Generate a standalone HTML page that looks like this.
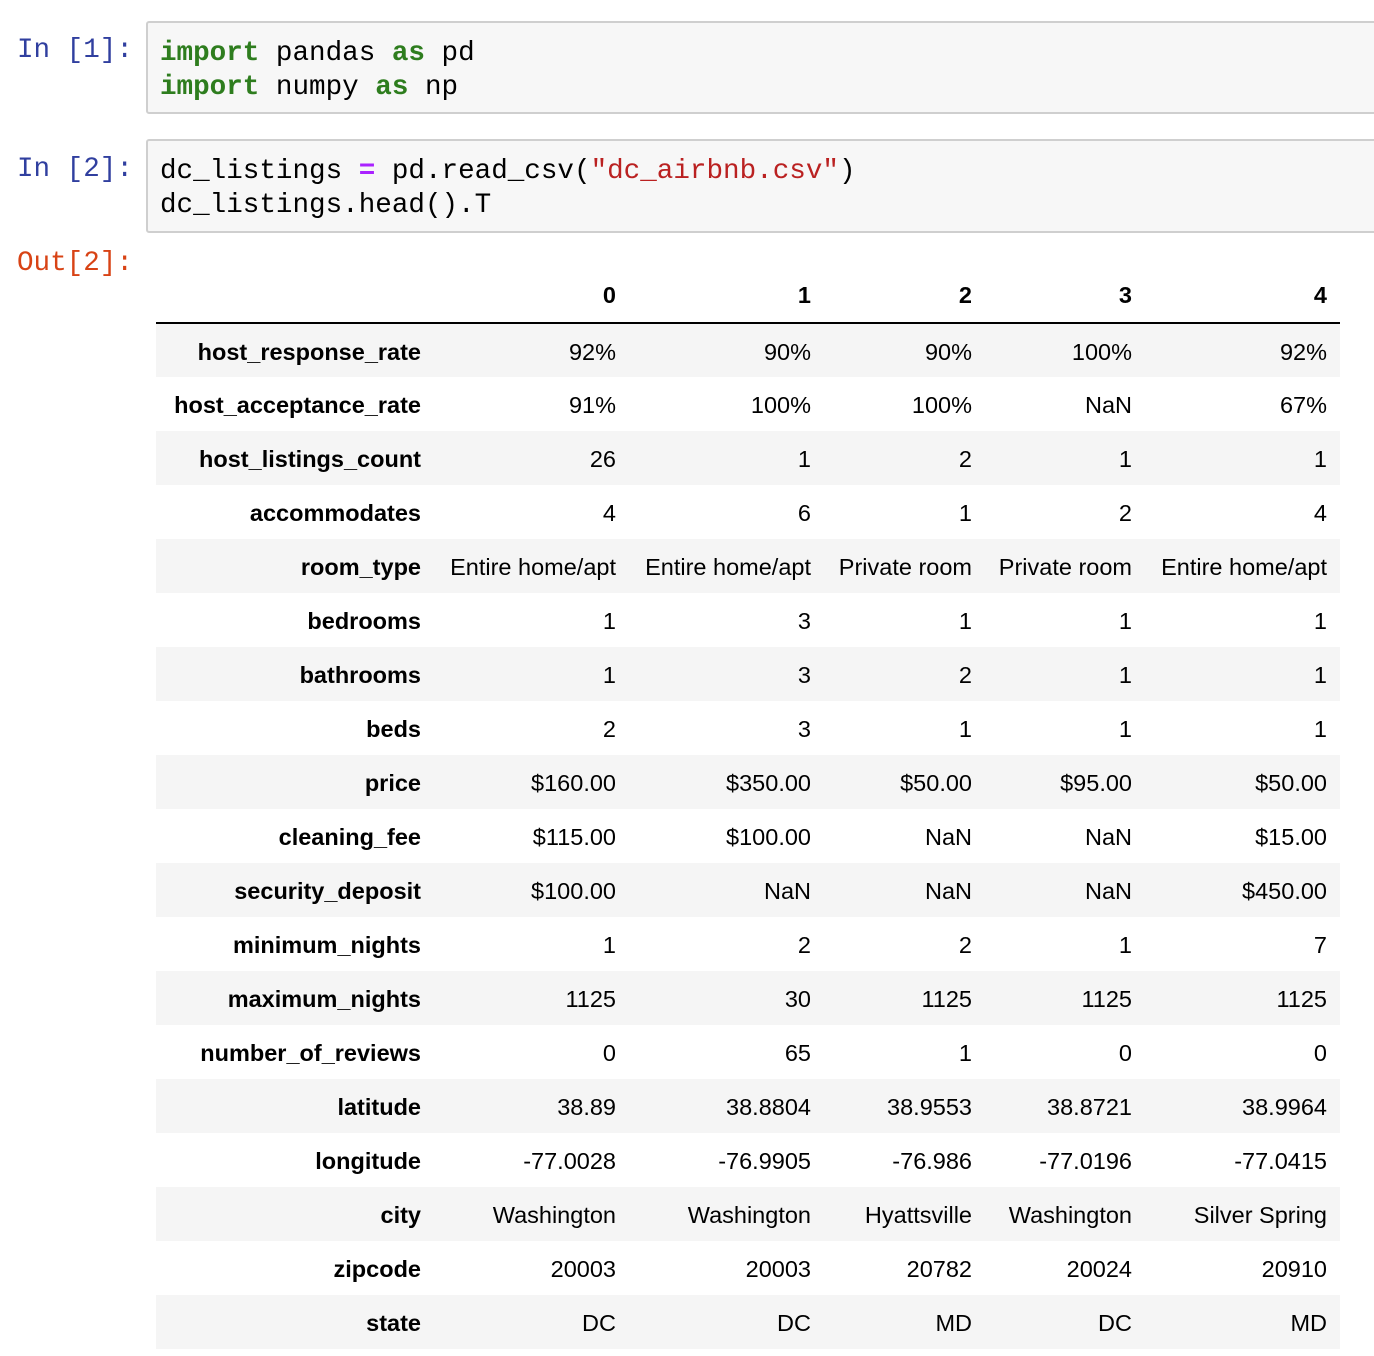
<!DOCTYPE html>
<html><head><meta charset="utf-8"><style>
body{margin:0;background:#fff;width:1374px;height:1356px;overflow:hidden;position:relative;font-family:"Liberation Sans",sans-serif;}
.mono{font-family:"Liberation Mono","DejaVu Sans Mono",monospace;font-size:27.6px;}
.prompt{position:absolute;left:17px;color:#303f9f;}
.box{position:absolute;left:146px;width:1240px;background:#f7f7f7;border:2px solid #cfcfcf;border-radius:3px;box-sizing:border-box;padding:14px 0 0 12px;line-height:34px;white-space:pre;}
.k{color:#2e7d1e;font-weight:bold;}
.o{color:#aa22ff;font-weight:bold;}
.s{color:#ba2121;}
table{position:absolute;left:156px;top:268px;border-collapse:collapse;font-size:23.5px;color:#000;}
td,th{height:54px;padding:3px 13px 0 0;text-align:right;white-space:nowrap;box-sizing:border-box;}
thead th{height:55px;border-bottom:2px solid #000;padding-top:0;}
tbody th{font-weight:bold;}
tbody tr:nth-child(odd){background:#f5f5f5;}
</style></head><body>
<div class="mono prompt" style="top:35px">In [1]:</div>
<div class="mono box" style="top:21px;height:93px"><span class="k">import</span> pandas <span class="k">as</span> pd
<span class="k">import</span> numpy <span class="k">as</span> np</div>
<div class="mono prompt" style="top:154px">In [2]:</div>
<div class="mono box" style="top:139px;height:94px">dc_listings <span class="o">=</span> pd.read_csv(<span class="s">"dc_airbnb.csv"</span>)
dc_listings.head().T</div>
<div class="mono prompt" style="top:248px;color:#d84315">Out[2]:</div>
<table>
<colgroup><col style="width:278px"><col style="width:195px"><col style="width:195px"><col style="width:161px"><col style="width:160px"><col style="width:195px"></colgroup>
<thead><tr><th></th><th>0</th><th>1</th><th>2</th><th>3</th><th>4</th></tr></thead>
<tbody>
<tr><th>host_response_rate</th><td>92%</td><td>90%</td><td>90%</td><td>100%</td><td>92%</td></tr>
<tr><th>host_acceptance_rate</th><td>91%</td><td>100%</td><td>100%</td><td>NaN</td><td>67%</td></tr>
<tr><th>host_listings_count</th><td>26</td><td>1</td><td>2</td><td>1</td><td>1</td></tr>
<tr><th>accommodates</th><td>4</td><td>6</td><td>1</td><td>2</td><td>4</td></tr>
<tr><th>room_type</th><td>Entire home/apt</td><td>Entire home/apt</td><td>Private room</td><td>Private room</td><td>Entire home/apt</td></tr>
<tr><th>bedrooms</th><td>1</td><td>3</td><td>1</td><td>1</td><td>1</td></tr>
<tr><th>bathrooms</th><td>1</td><td>3</td><td>2</td><td>1</td><td>1</td></tr>
<tr><th>beds</th><td>2</td><td>3</td><td>1</td><td>1</td><td>1</td></tr>
<tr><th>price</th><td>$160.00</td><td>$350.00</td><td>$50.00</td><td>$95.00</td><td>$50.00</td></tr>
<tr><th>cleaning_fee</th><td>$115.00</td><td>$100.00</td><td>NaN</td><td>NaN</td><td>$15.00</td></tr>
<tr><th>security_deposit</th><td>$100.00</td><td>NaN</td><td>NaN</td><td>NaN</td><td>$450.00</td></tr>
<tr><th>minimum_nights</th><td>1</td><td>2</td><td>2</td><td>1</td><td>7</td></tr>
<tr><th>maximum_nights</th><td>1125</td><td>30</td><td>1125</td><td>1125</td><td>1125</td></tr>
<tr><th>number_of_reviews</th><td>0</td><td>65</td><td>1</td><td>0</td><td>0</td></tr>
<tr><th>latitude</th><td>38.89</td><td>38.8804</td><td>38.9553</td><td>38.8721</td><td>38.9964</td></tr>
<tr><th>longitude</th><td>-77.0028</td><td>-76.9905</td><td>-76.986</td><td>-77.0196</td><td>-77.0415</td></tr>
<tr><th>city</th><td>Washington</td><td>Washington</td><td>Hyattsville</td><td>Washington</td><td>Silver Spring</td></tr>
<tr><th>zipcode</th><td>20003</td><td>20003</td><td>20782</td><td>20024</td><td>20910</td></tr>
<tr><th>state</th><td>DC</td><td>DC</td><td>MD</td><td>DC</td><td>MD</td></tr>
</tbody></table>
</body></html>
